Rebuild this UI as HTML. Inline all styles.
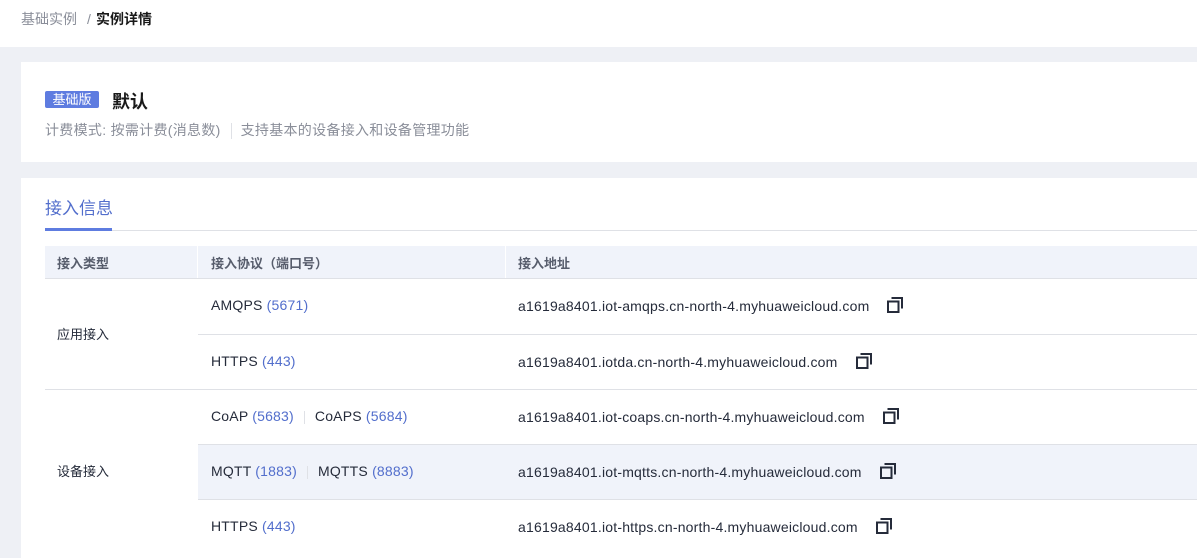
<!DOCTYPE html>
<html><head><meta charset="utf-8"><style>
*{margin:0;padding:0;box-sizing:border-box}
body{width:1197px;height:549px;overflow:hidden;background:#eef0f5;font-family:"Liberation Sans","Noto Sans CJK SC",sans-serif;position:relative;color:#252b3a}
.hdr{position:absolute;left:0;top:0;width:1197px;height:47px;background:#fff;font-size:14px;line-height:14px}
.hdr span{position:absolute;top:12px}
.card{position:absolute;left:21px;right:0;background:#fff}
.tag{position:absolute;left:24px;top:29px;width:54px;height:17px;background:#5e7ce0;color:#fff;font-size:13px;line-height:17px;text-align:center;border-radius:2px}
.title{position:absolute;left:91px;top:26px;font-size:18px;font-weight:bold;color:#191919}
.sub{position:absolute;left:24px;top:58px;font-size:14px;letter-spacing:0.3px;color:#8a8e99;white-space:nowrap}
.sub i{display:inline-block;width:1px;height:16px;background:#dfe1e6;vertical-align:middle;margin:0 9px 0 10px}
.tab{position:absolute;left:24px;top:16px;font-size:17px;color:#526ecc}
.tabl{position:absolute;left:24px;top:50px;width:67px;height:3px;background:#5e7ce0}
.tabline{position:absolute;left:24px;right:0;top:52px;height:1px;background:#dfe1e6}
.th{position:absolute;top:68px;height:33px;background:#f0f3fa;left:24px;right:0}
.th span{position:absolute;top:7px;font-size:13px;font-weight:bold;color:#575d6c}
.sep{position:absolute;top:0;width:1px;height:33px;background:#fff}
.row{position:absolute;left:177px;right:0;border-bottom:1px solid #dfe1e6;font-size:14px;letter-spacing:0.2px}
.row .p{position:absolute;left:13px;top:18px;color:#252b3a;white-space:nowrap}
.row .a{position:absolute;left:320px;top:18px;white-space:nowrap}
.b{color:#526ecc}
.v{display:inline-block;width:1px;height:13px;background:#dfe1e6;vertical-align:middle;margin:0 10px}
.cp{display:inline-block;vertical-align:-2px;margin-left:18px}
.lbl{position:absolute;left:36px;font-size:13px}
</style></head><body>
<div class="hdr"><span style="left:21px;color:#8a8e99">基础实例</span><span style="left:87px;color:#8a8e99">/</span><span style="left:96px;font-weight:bold;color:#191919">实例详情</span></div>
<div class="card" style="top:62px;height:100px">
<div class="tag">基础版</div><div class="title">默认</div>
<div class="sub">计费模式: 按需计费(消息数)<i></i>支持基本的设备接入和设备管理功能</div>
</div>
<div class="card" style="top:178px;height:380px">
<div class="tab">接入信息</div><div class="tabline"></div><div class="tabl"></div>
<div class="th"><span style="left:12px">接入类型</span><div class="sep" style="left:152px"></div><span style="left:166px">接入协议（端口号）</span><div class="sep" style="left:460px"></div><span style="left:473px">接入地址</span></div>
<div style="position:absolute;left:24px;right:0;top:100px;height:1px;background:#dfe1e6"></div>
<div class="lbl" style="top:146px">应用接入</div>
<div class="lbl" style="top:283px">设备接入</div>
<div style="position:absolute;left:24px;right:0;top:211px;height:1px;background:#dfe1e6"></div>
<div class="row" style="top:101px;height:56px"><div class="p">AMQPS <span class="b">(5671)</span></div><div class="a">a1619a8401.iot-amqps.cn-north-4.myhuaweicloud.com<svg class="cp" width="16" height="16" viewBox="0 0 16 16"><rect x="1" y="4.5" width="10.5" height="10.5" fill="none" stroke="#252b3a" stroke-width="2"/><path d="M4.5 1H15V11.5" fill="none" stroke="#252b3a" stroke-width="2"/></svg></div></div>
<div class="row" style="top:157px;height:55px;border:none"><div class="p">HTTPS <span class="b">(443)</span></div><div class="a">a1619a8401.iotda.cn-north-4.myhuaweicloud.com<svg class="cp" width="16" height="16" viewBox="0 0 16 16"><rect x="1" y="4.5" width="10.5" height="10.5" fill="none" stroke="#252b3a" stroke-width="2"/><path d="M4.5 1H15V11.5" fill="none" stroke="#252b3a" stroke-width="2"/></svg></div></div>
<div class="row" style="top:212px;height:55px"><div class="p">CoAP <span class="b">(5683)</span><span class="v"></span>CoAPS <span class="b">(5684)</span></div><div class="a">a1619a8401.iot-coaps.cn-north-4.myhuaweicloud.com<svg class="cp" width="16" height="16" viewBox="0 0 16 16"><rect x="1" y="4.5" width="10.5" height="10.5" fill="none" stroke="#252b3a" stroke-width="2"/><path d="M4.5 1H15V11.5" fill="none" stroke="#252b3a" stroke-width="2"/></svg></div></div>
<div class="row" style="top:267px;height:55px;background:#f0f3fa"><div class="p">MQTT <span class="b">(1883)</span><span class="v"></span>MQTTS <span class="b">(8883)</span></div><div class="a">a1619a8401.iot-mqtts.cn-north-4.myhuaweicloud.com<svg class="cp" width="16" height="16" viewBox="0 0 16 16"><rect x="1" y="4.5" width="10.5" height="10.5" fill="none" stroke="#252b3a" stroke-width="2"/><path d="M4.5 1H15V11.5" fill="none" stroke="#252b3a" stroke-width="2"/></svg></div></div>
<div class="row" style="top:322px;height:55px;border:none"><div class="p">HTTPS <span class="b">(443)</span></div><div class="a">a1619a8401.iot-https.cn-north-4.myhuaweicloud.com<svg class="cp" width="16" height="16" viewBox="0 0 16 16"><rect x="1" y="4.5" width="10.5" height="10.5" fill="none" stroke="#252b3a" stroke-width="2"/><path d="M4.5 1H15V11.5" fill="none" stroke="#252b3a" stroke-width="2"/></svg></div></div>
</div>
</body></html>
